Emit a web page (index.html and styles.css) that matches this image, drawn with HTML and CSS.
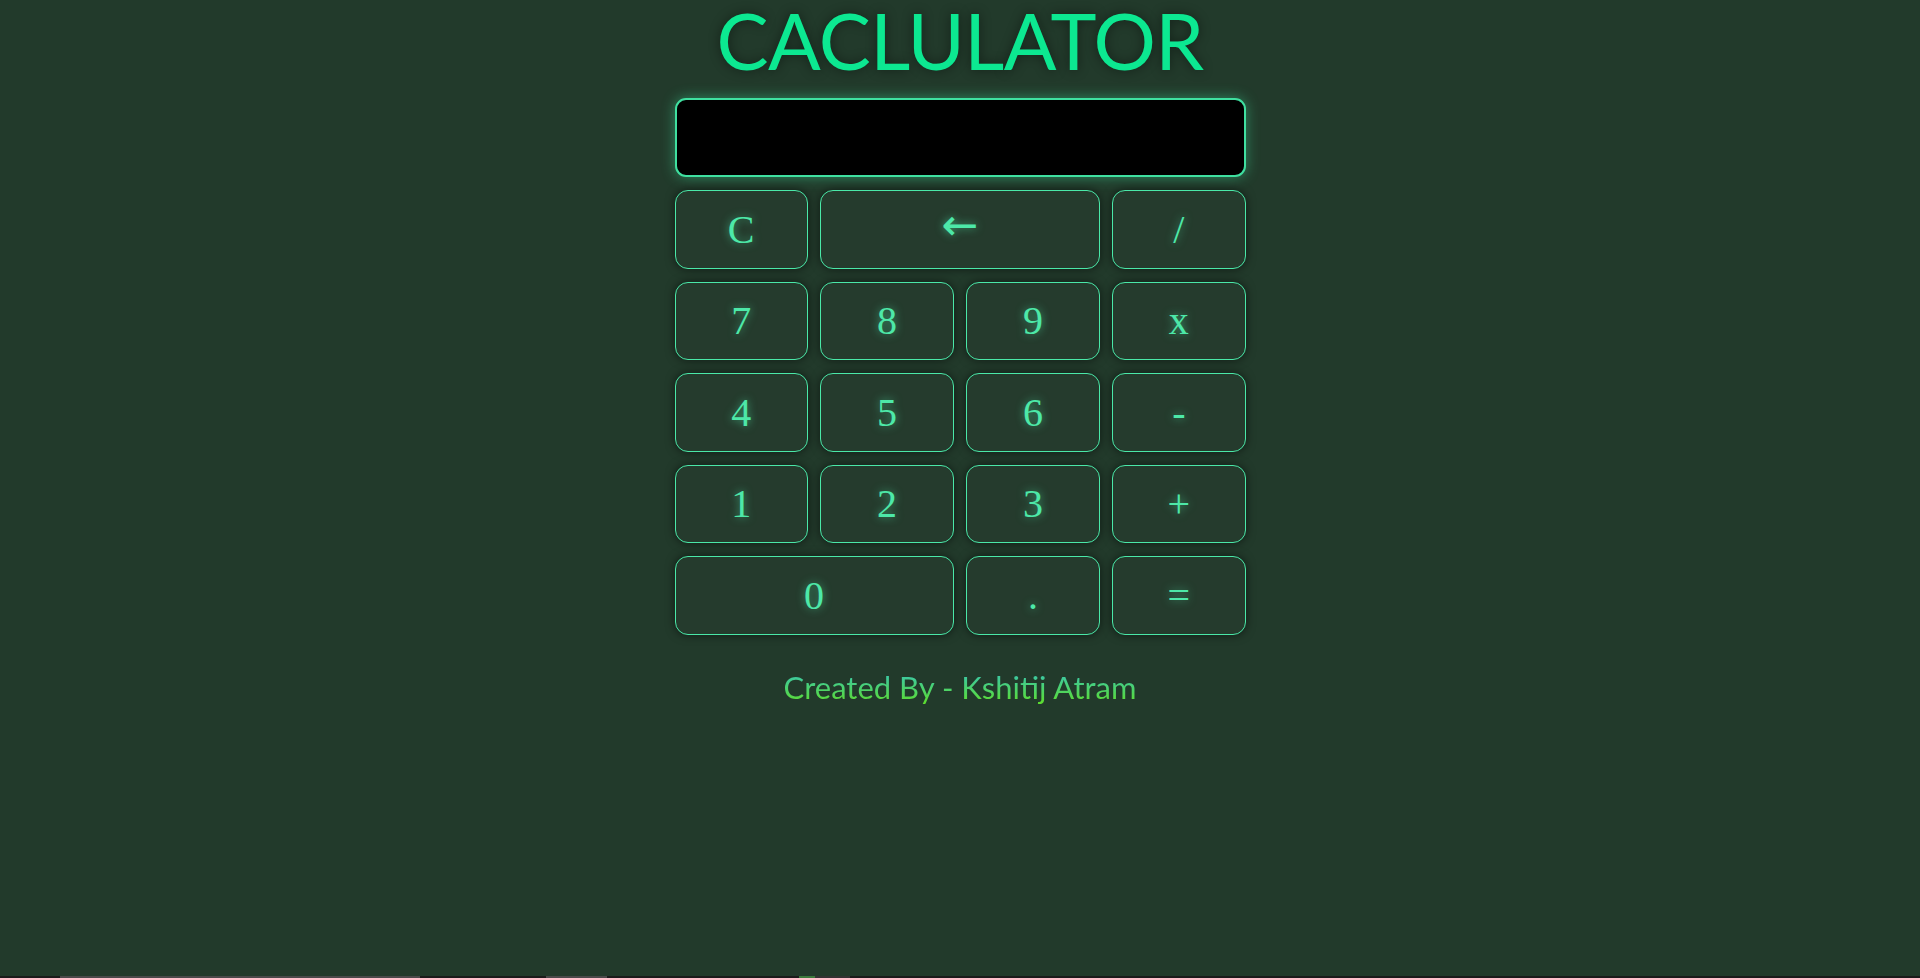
FILE: index.html
```html
<!DOCTYPE html>
<html lang="en">
<head>
<meta charset="utf-8">
<title>Calculator</title>
<link rel="stylesheet" href="styles.css">
</head>
<body>
<h1 class="title">CACLULATOR</h1>
<div class="calc">
  <div class="display"></div>
  <button class="key">C</button>
  <button class="key wide arrow">&larr;</button>
  <button class="key">/</button>
  <button class="key">7</button>
  <button class="key">8</button>
  <button class="key">9</button>
  <button class="key">x</button>
  <button class="key">4</button>
  <button class="key">5</button>
  <button class="key">6</button>
  <button class="key">-</button>
  <button class="key">1</button>
  <button class="key">2</button>
  <button class="key">3</button>
  <button class="key">+</button>
  <button class="key wide">0</button>
  <button class="key">.</button>
  <button class="key">=</button>
</div>
<p class="credit">Created By - Kshitij Atram</p>
<div class="bottom-strip">
  <span class="seg seg-a"></span>
  <span class="seg seg-b"></span>
  <span class="seg seg-c"></span>
  <span class="seg seg-d"></span>
</div>
</body>
</html>
```
FILE: styles.css
```css
html, body {
  margin: 0;
  padding: 0;
}
body {
  background: #223a2b;
  min-height: 100vh;
  display: flex;
  flex-direction: column;
  align-items: center;
  font-family: "Lato", "Liberation Sans", sans-serif;
}
.title {
  margin: 0;
  padding: 0;
  font-family: "Lato", "Liberation Sans", sans-serif;
  font-weight: 400;
  font-size: 78px;
  line-height: 80px;
  color: #0ce891;
  letter-spacing: -0.6px;
  text-shadow: 0 0 12px rgba(0, 0, 0, 0.45);
}
.calc {
  margin-top: 18px;
  width: 571px;
  display: grid;
  grid-template-columns: repeat(4, 1fr);
  grid-template-rows: 79px repeat(5, 78.5px);
  column-gap: 12.6px;
  row-gap: 13px;
}
.display {
  grid-column: 1 / -1;
  background: #000;
  border: 2px solid #3fe0a0;
  border-radius: 11px;
  box-sizing: border-box;
  box-shadow: 0 0 14px rgba(60, 230, 160, 0.45);
}
.key {
  background: #253b2d;
  border: 1px solid #4ae8a8;
  border-radius: 13px;
  color: #4de8a8;
  font-family: "Liberation Serif", "DejaVu Serif", serif;
  font-size: 40px;
  padding: 0;
  text-shadow: 0 0 8px rgba(77, 232, 168, 0.6);
  box-shadow: 0 0 10px rgba(0, 0, 0, 0.55);
  cursor: pointer;
}
.wide {
  grid-column: span 2;
}
.arrow {
  font-family: "DejaVu Sans", sans-serif;
  font-size: 44px;
  line-height: 1;
  padding-bottom: 8px;
}
.credit {
  margin: 32px 0 0;
  font-family: "Lato", "Liberation Sans", sans-serif;
  font-size: 31px;
  line-height: 40px;
  background: linear-gradient(to bottom, #3cc8a4 20%, #5cdc30 90%);
  -webkit-background-clip: text;
  background-clip: text;
  color: transparent;
}
.bottom-strip {
  position: fixed;
  left: 0;
  right: 0;
  bottom: 0;
  height: 2px;
  background: #1b1b1b;
  display: flex;
}
.seg {
  height: 2px;
}
.seg-a { margin-left: 60px; width: 360px; background: #4a4a4a; }
.seg-b { margin-left: 126px; width: 61px; background: #4a4a4a; }
.seg-c { margin-left: 192px; width: 16px; background: #3d7a3d; }
.seg-d { width: 35px; background: #333; }
```
